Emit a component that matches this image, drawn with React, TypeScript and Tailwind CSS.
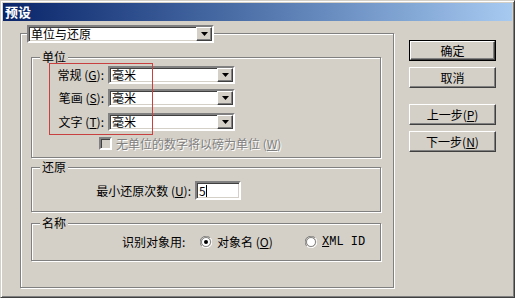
import React from 'react';

const sunken =
  'border-2 border-t-[#808080] border-l-[#808080] border-b-white border-r-white shadow-[inset_1px_1px_0_#404040,inset_-1px_-1px_0_#d4d0c8] bg-white';
const raised =
  'border border-t-white border-l-white border-b-[#404040] border-r-[#404040] shadow-[inset_-1px_-1px_0_#808080] bg-[#d4d0c8]';
const etched = 'border border-[#808080] shadow-[inset_1px_1px_0_#fff,1px_1px_0_#fff]';

const Key: React.FC<{ k: string }> = ({ k }) => (
  <span>
    (<span className="underline">{k}</span>)
  </span>
);

const Arrow: React.FC = () => (
  <div className={`${raised} w-[16px] h-full flex items-center justify-center`}>
    <svg width="7" height="4" viewBox="0 0 7 4">
      <path d="M0 0h7L3.5 4z" fill="#000" />
    </svg>
  </div>
);

const Select: React.FC<{ value: string; width: string }> = ({ value, width }) => (
  <div className={`${sunken} ${width} h-[18px] flex items-stretch`}>
    <div className="flex-1 flex items-center pl-[2px] text-[12px] leading-none">{value}</div>
    <Arrow />
  </div>
);

const Legend: React.FC<{ text: string }> = ({ text }) => (
  <span className="absolute left-[8px] -top-[8px] px-[2px] bg-[#d4d0c8] text-[12px] leading-[14px]">{text}</span>
);

const Radio: React.FC<{ checked?: boolean }> = ({ checked }) => (
  <svg width="12" height="12" viewBox="0 0 12 12" className="shrink-0">
    <path d="M10.2 1.8A6 6 0 0 0 0 6a6 6 0 0 0 1.8 4.2" fill="none" stroke="#808080" />
    <path d="M1.8 10.2A6 6 0 0 0 12 6a6 6 0 0 0-1.8-4.2" fill="none" stroke="#fff" />
    <circle cx="6" cy="6" r="4.5" fill="#fff" stroke="#404040" strokeWidth="0.6" />
    {checked && <circle cx="6" cy="6" r="2" fill="#000" />}
  </svg>
);

const Button: React.FC<{ children: React.ReactNode; primary?: boolean; className?: string }> = ({
  children,
  primary,
  className = '',
}) => (
  <div className={`w-[87px] h-[21px] ${primary ? 'border border-black' : ''} ${className}`}>
    <div className={`${raised} w-full h-full flex items-center justify-center text-[12px] leading-none`}>
      {children}
    </div>
  </div>
);

export default function App() {
  return (
    <div
      className="w-[515px] h-[298px] bg-[#d4d0c8] border border-t-[#d4d0c8] border-l-[#d4d0c8] border-r-[#404040] border-b-[#404040] shadow-[inset_1px_1px_0_#fff,inset_-1px_-1px_0_#808080] p-[2px] flex flex-col text-black font-['Noto_Sans_CJK_SC','Liberation_Sans',sans-serif]"
    >
      <div className="h-[18px] bg-gradient-to-r from-[#0a246a] to-[#a6caf0] flex items-center pl-[2px] text-white font-bold text-[13px]">
        预设
      </div>

      <div className="flex pl-[17px] pt-[12px]">
        {/* main group */}
        <div className={`relative w-[374px] h-[255px] ${etched} flex flex-col pl-[10px] pt-[23px]`}>
          <div className="absolute left-[6px] -top-[9px]">
            <Select value="单位与还原" width="w-[187px]" />
          </div>

          {/* 单位 */}
          <div className={`relative w-[350px] h-[101px] ${etched} flex flex-col`}>
            <Legend text="单位" />
            {[
              ['常规', 'G', 'mt-[8px]'],
              ['笔画', 'S', 'mt-[5px]'],
              ['文字', 'T', 'mt-[6px]'],
            ].map(([label, k, mt]) => (
              <div key={k} className={`flex items-center ${mt}`}>
                <div className="w-[76px] pr-[4px] text-right text-[12px] leading-none">
                  {label} <Key k={k} />:
                </div>
                <Select value="毫米" width="w-[127px]" />
              </div>
            ))}
            <div className="flex items-center mt-[6px] ml-[67px]">
              <div className={`${sunken} !bg-[#d4d0c8] w-[13px] h-[13px]`} />
              <span className="ml-[4px] text-[12px] leading-none text-[#808080] [text-shadow:1px_1px_0_#fff]">
                无单位的数字将以磅为单位 <Key k="W" />
              </span>
            </div>
            <div className="absolute left-[17px] top-[5px] w-[104px] h-[72px] border border-[#c84040]" />
          </div>

          {/* 还原 */}
          <div className={`relative mt-[9px] w-[350px] h-[45px] ${etched} flex items-start pt-[13px]`}>
            <Legend text="还原" />
            <div className="w-[159px] text-right text-[12px] leading-[19px]">
              最小还原次数 <Key k="U" />:
            </div>
            <div className={`${sunken} ml-[4px] w-[46px] h-[19px] flex items-center pl-[2px] text-[12px] leading-none`}>
              5<span className="w-px h-[12px] bg-black" />
            </div>
          </div>

          {/* 名称 */}
          <div className={`relative mt-[11px] w-[350px] h-[38px] ${etched} flex items-center pl-[90px]`}>
            <Legend text="名称" />
            <div className="w-[78px] text-[12px] leading-none">识别对象用:</div>
            <Radio checked />
            <div className="ml-[5px] w-[88px] text-[12px] leading-none">
              对象名 <Key k="O" />
            </div>
            <Radio />
            <div className="ml-[5px] text-[12px] leading-none font-['Liberation_Mono',monospace]">
              <span className="underline">X</span>ML ID
            </div>
          </div>
        </div>

        {/* buttons */}
        <div className="ml-[15px] pt-[7px] flex flex-col">
          <Button primary>确定</Button>
          <Button className="mt-[6px]">取消</Button>
          <Button className="mt-[16px]">
            上一步 <Key k="P" />
          </Button>
          <Button className="mt-[6px]">
            下一步 <Key k="N" />
          </Button>
        </div>
      </div>
    </div>
  );
}
